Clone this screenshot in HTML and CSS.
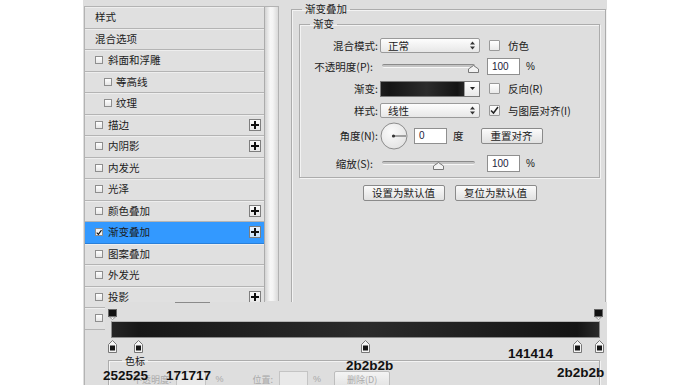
FILE: index.html
```html
<!DOCTYPE html>
<html lang="zh-CN">
<head>
<meta charset="utf-8">
<title>图层样式 - 渐变叠加</title>
<link rel="stylesheet" href="styles.css">
</head>
<body>
<div class="window">
  <div class="main">
    <div class="listwrap">
      <div class="list">
        <div class="row"><span class="lbl">样式</span></div>
        <div class="row"><span class="lbl">混合选项</span></div>
        <div class="row"><span class="cb"></span><span class="lbl">斜面和浮雕</span></div>
        <div class="row sub"><span class="cb"></span><span class="lbl">等高线</span></div>
        <div class="row sub"><span class="cb"></span><span class="lbl">纹理</span></div>
        <div class="row"><span class="cb"></span><span class="lbl">描边</span><span class="plus"><svg width="8" height="8" viewBox="0 0 8 8"><rect x="3" y="0" width="2" height="8" fill="#111"/><rect x="0" y="3" width="8" height="2" fill="#111"/></svg></span></div>
        <div class="row"><span class="cb"></span><span class="lbl">内阴影</span><span class="plus"><svg width="8" height="8" viewBox="0 0 8 8"><rect x="3" y="0" width="2" height="8" fill="#111"/><rect x="0" y="3" width="8" height="2" fill="#111"/></svg></span></div>
        <div class="row"><span class="cb"></span><span class="lbl">内发光</span></div>
        <div class="row"><span class="cb"></span><span class="lbl">光泽</span></div>
        <div class="row"><span class="cb"></span><span class="lbl">颜色叠加</span><span class="plus"><svg width="8" height="8" viewBox="0 0 8 8"><rect x="3" y="0" width="2" height="8" fill="#111"/><rect x="0" y="3" width="8" height="2" fill="#111"/></svg></span></div>
        <div class="row selected"><span class="cb checked"><svg width="7" height="7" viewBox="0 0 7 7"><path d="M0.8 3.6 L2.8 5.6 L6.4 0.8" fill="none" stroke="#111" stroke-width="1.4"/></svg></span><span class="lbl">渐变叠加</span><span class="plus"><svg width="8" height="8" viewBox="0 0 8 8"><rect x="3" y="0" width="2" height="8" fill="#111"/><rect x="0" y="3" width="8" height="2" fill="#111"/></svg></span></div>
        <div class="row"><span class="cb"></span><span class="lbl">图案叠加</span></div>
        <div class="row"><span class="cb"></span><span class="lbl">外发光</span></div>
        <div class="row"><span class="cb"></span><span class="lbl">投影</span><span class="plus"><svg width="8" height="8" viewBox="0 0 8 8"><rect x="3" y="0" width="2" height="8" fill="#111"/><rect x="0" y="3" width="8" height="2" fill="#111"/></svg></span></div>
        <div class="row"><span class="cb"></span><span class="lbl"></span></div>
      </div>
      <div class="scrollbar"></div>
    </div>

    <fieldset class="group outer">
      <legend>渐变叠加</legend>
      <fieldset class="group inner">
        <legend>渐变</legend>

        <div class="frow r1">
          <span class="flabel">混合模式:</span>
          <div class="select"><span>正常</span><svg width="5" height="9" viewBox="0 0 5 9"><path d="M0 3.5 L2.5 0.5 L5 3.5Z M0 5.5 L2.5 8.5 L5 5.5Z" fill="#333"/></svg></div>
          <span class="opt"><span class="box"></span>仿色</span>
        </div>

        <div class="frow r2">
          <span class="flabel slabel">不透明度(P):</span>
          <div class="slider"><div class="track"></div><svg class="thumb" style="left:88px" width="11" height="8" viewBox="0 0 11 8"><path d="M0.5 7.5 V4 L5.5 0.5 L10.5 4 V7.5 Z" fill="#f2f2f2" stroke="#777"/></svg></div>
          <span class="input">100</span><span class="unit">%</span>
        </div>

        <div class="frow r3">
          <span class="flabel">渐变:</span>
          <div class="swatch"><div class="grad"></div><div class="drop"><svg width="5" height="3" viewBox="0 0 5 3"><path d="M0 0 H5 L2.5 3Z" fill="#222"/></svg></div></div>
          <span class="opt"><span class="box"></span>反向(R)</span>
        </div>

        <div class="frow r4">
          <span class="flabel">样式:</span>
          <div class="select"><span>线性</span><svg width="5" height="9" viewBox="0 0 5 9"><path d="M0 3.5 L2.5 0.5 L5 3.5Z M0 5.5 L2.5 8.5 L5 5.5Z" fill="#333"/></svg></div>
          <span class="opt"><span class="box"><svg width="9" height="9" viewBox="0 0 9 9"><path d="M1 4.5 L3.5 7 L8 1" fill="none" stroke="#222" stroke-width="1.5"/></svg></span>与图层对齐(I)</span>
        </div>

        <div class="frow r5">
          <span class="flabel">角度(N):</span>
          <svg class="dial" width="28" height="28" viewBox="0 0 28 28"><defs><radialGradient id="dg" cx="0.4" cy="0.35" r="0.7"><stop offset="0" stop-color="#fbfbfb"/><stop offset="1" stop-color="#e2e2e2"/></radialGradient></defs><circle cx="14" cy="14" r="13" fill="url(#dg)" stroke="#8c8c8c"/><line x1="14" y1="14" x2="26" y2="14" stroke="#555" stroke-width="1"/><circle cx="13.5" cy="14" r="1.6" fill="#333"/></svg>
          <span class="input angle">0</span><span class="unit deg">度</span>
          <button class="btn reset">重置对齐</button>
        </div>

        <div class="frow r6">
          <span class="flabel slabel">缩放(S):</span>
          <div class="slider"><div class="track"></div><svg class="thumb" style="left:53px" width="11" height="8" viewBox="0 0 11 8"><path d="M0.5 7.5 V4 L5.5 0.5 L10.5 4 V7.5 Z" fill="#f2f2f2" stroke="#777"/></svg></div>
          <span class="input">100</span><span class="unit">%</span>
        </div>
      </fieldset>

      <div class="btnrow">
        <button class="btn wide">设置为默认值</button>
        <button class="btn wide">复位为默认值</button>
      </div>
    </fieldset>
  </div>

  <div class="editor">
    <div class="dash"></div>
    <div class="stoprow top">
      <svg class="stop" style="left:calc(0.4% - 4.5px)" width="9" height="11" viewBox="0 0 9 11"><rect x="0.5" y="0.5" width="8" height="7" fill="#111" stroke="#666"/><path d="M1.5 8 L4.5 10.5 L7.5 8Z" fill="#fff" stroke="#888" stroke-width="0.8"/></svg>
      <svg class="stop" style="left:calc(99.6% - 4.5px)" width="9" height="11" viewBox="0 0 9 11"><rect x="0.5" y="0.5" width="8" height="7" fill="#111" stroke="#666"/><path d="M1.5 8 L4.5 10.5 L7.5 8Z" fill="#fff" stroke="#888" stroke-width="0.8"/></svg>
    </div>
    <div class="bar"></div>
    <div class="stoprow bottom">
      <svg class="stop" style="left:calc(0.4% - 4.5px)" width="9" height="13" viewBox="0 0 9 13"><path d="M0.5 4.5 L4.5 0.5 L8.5 4.5 V12.5 H0.5Z" fill="#f4f4f4" stroke="#777"/><rect x="2" y="5.5" width="5" height="5" fill="#151515"/></svg>
      <svg class="stop" style="left:calc(5.7% - 4.5px)" width="9" height="13" viewBox="0 0 9 13"><path d="M0.5 4.5 L4.5 0.5 L8.5 4.5 V12.5 H0.5Z" fill="#f4f4f4" stroke="#777"/><rect x="2" y="5.5" width="5" height="5" fill="#151515"/></svg>
      <svg class="stop" style="left:calc(52.1% - 4.5px)" width="9" height="13" viewBox="0 0 9 13"><path d="M0.5 4.5 L4.5 0.5 L8.5 4.5 V12.5 H0.5Z" fill="#f4f4f4" stroke="#777"/><rect x="2" y="5.5" width="5" height="5" fill="#151515"/></svg>
      <svg class="stop" style="left:calc(95.3% - 4.5px)" width="9" height="13" viewBox="0 0 9 13"><path d="M0.5 4.5 L4.5 0.5 L8.5 4.5 V12.5 H0.5Z" fill="#f4f4f4" stroke="#777"/><rect x="2" y="5.5" width="5" height="5" fill="#151515"/></svg>
      <svg class="stop" style="left:calc(99.8% - 4.5px)" width="9" height="13" viewBox="0 0 9 13"><path d="M0.5 4.5 L4.5 0.5 L8.5 4.5 V12.5 H0.5Z" fill="#f4f4f4" stroke="#777"/><rect x="2" y="5.5" width="5" height="5" fill="#151515"/></svg>
    </div>
    <fieldset class="group stops">
      <legend>色标</legend>
      <div class="faded">
        <span>不透明度:</span><span class="finput"></span><span class="fu">%</span>
        <span class="fpos">位置:</span><span class="finput pos"></span><span class="fu2">%</span>
        <span class="fbtn">删除(D)</span>
      </div>
    </fieldset>

    <span class="note n1">252525</span>
    <span class="note n2">171717</span>
    <span class="note n3">2b2b2b</span>
    <span class="note n4">141414</span>
    <span class="note n5">2b2b2b</span>
  </div>
</div>
</body>
</html>
```

FILE: styles.css
```css
* { box-sizing: border-box; }
html, body { margin: 0; padding: 0; background: #ffffff; }
body {
  width: 690px;
  height: 390px;
  overflow: hidden;
  font-family: "Noto Sans CJK SC", "Liberation Sans", sans-serif;
  font-size: 10.5px;
  color: #1b1b1b;
}

.window {
  margin-left: 83px;
  width: 524px;
  height: 385px;
  background: #dedede;
  position: relative;
  overflow: hidden;
}
.main { display: flex; height: 100%; align-items: flex-start; }

/* ---------- left style list ---------- */
.listwrap {
  display: flex;
  margin: 6px 0 0 1px;
  height: 379px;
  border-top: 1px solid #b3b3b3;
  border-left: 1px solid #b3b3b3;
}
.list {
  width: 180px;
  border-right: 1px solid #ababab;
  overflow: hidden;
}
.row {
  height: 21.5px;
  display: flex;
  align-items: center;
  padding-left: 10px;
  background: #e0e0e0;
  border-bottom: 1px solid #b4b4b4;
  box-shadow: inset 0 1px 0 #eeeeee;
  white-space: nowrap;
  line-height: 14px;
}
.row.sub { padding-left: 19px; }
.row.selected { background: #3399ff; box-shadow: none; border-bottom-color: #2a7fd8; }
.row .cb {
  width: 8px;
  height: 8px;
  border: 1px solid #8e8e8e;
  background: linear-gradient(#ffffff, #e6e6e6);
  margin-right: 5px;
  flex: none;
  display: flex;
  align-items: center;
  justify-content: center;
}
.row .cb.checked { background: #f4f4f4; }
.row.sub .cb { margin-right: 4px; }
.plus {
  margin-left: auto;
  margin-right: 3px;
  width: 12px;
  height: 12px;
  border: 1px solid #7e7e7e;
  background: linear-gradient(#fbfbfb, #e8e8e8);
  display: flex;
  align-items: center;
  justify-content: center;
  flex: none;
}
.selected .plus { background: linear-gradient(#eaf4ff, #c9e2fb); }

.scrollbar {
  width: 14px;
  height: 294px;
  border-right: 1px solid #b2b2b2;
  background: linear-gradient(to right, #d3d3d3, #f7f7f7 40%, #f4f4f4 60%, #d9d9d9);
}

/* ---------- group boxes ---------- */
.group {
  margin: 0;
  min-width: 0;
  border: 1px solid #acacac;
  box-shadow: inset 1px 1px 0 #f3f3f3, 1px 1px 0 #f3f3f3;
}
.group legend {
  padding: 0 3px;
  line-height: 14px;
  font-size: 10.5px;
}
.outer {
  margin: 2px 0 0 12px;
  width: 315px;
  height: 360px;
  padding: 0 5px 0 7px;
}
.outer > legend { margin-left: 3px; }
.inner {
  margin-top: 1px;
  padding: 6px 0 5px 0;
}
.inner > legend { margin-left: 10px; }

.frow { display: flex; align-items: center; height: 17px; white-space: nowrap; }
.r2 { margin-top: 4px; }
.r3 { margin-top: 5px; }
.r4 { margin-top: 5px; }
.r5 { margin-top: 2px; height: 29px; }
.r6 { margin-top: 5px; }

.flabel { width: 78px; text-align: right; margin-right: 2px; flex: none; }
.flabel.slabel { padding-right: 5px; }

.select {
  width: 100px;
  height: 15px;
  border: 1px solid #9a9a9a;
  border-radius: 2px;
  background: linear-gradient(#fdfdfd, #e7e7e7);
  display: flex;
  align-items: center;
  justify-content: space-between;
  padding: 0 4px 0 7px;
  flex: none;
}
.opt { display: flex; align-items: center; margin-left: 9px; }
.opt .box {
  width: 11px;
  height: 11px;
  border: 1px solid #999;
  border-radius: 1px;
  background: linear-gradient(#ffffff, #e9e9e9);
  margin-right: 8px;
  display: flex;
  align-items: center;
  justify-content: center;
}

.slider { position: relative; width: 100px; height: 17px; flex: none; }
.track {
  margin: 6px 5px 0 2px;
  height: 4px;
  border-radius: 2px;
  background: #c4c4c4;
  border-top: 1px solid #8a8a8a;
  border-bottom: 1px solid #f6f6f6;
}
.thumb { position: absolute; top: 7px; }

.input {
  width: 33px;
  height: 17px;
  margin-left: 7px;
  border: 1px solid #8f8f8f;
  background: #ffffff;
  padding-left: 4px;
  display: flex;
  align-items: center;
  color: #1c1c3a;
  font-family: "Liberation Sans", sans-serif;
  font-size: 10px;
}
.unit { margin-left: 6px; font-family: "Liberation Sans", sans-serif; font-size: 10px; }
.input.angle { margin-left: 6px; height: 16px; }
.unit.deg { margin-left: 6px; font-family: "Noto Sans CJK SC", sans-serif; font-size: 10.5px; }

.swatch {
  width: 100px;
  height: 16px;
  border: 1px solid #7a7a7a;
  display: flex;
  flex: none;
}
.grad { flex: 1; background: linear-gradient(to right, #1d1d1d, #151515 10%, #2c2c2c 55%, #141414 92%, #272727); }
.drop {
  width: 15px;
  border-left: 1px solid #9c9c9c;
  background: linear-gradient(#ffffff, #e8e8e8);
  display: flex;
  align-items: center;
  justify-content: center;
}

.dial { flex: none; }

.btn {
  height: 16px;
  padding: 0;
  border: 1px solid #8a8a8a;
  border-radius: 2px;
  background: linear-gradient(#fbfbfb, #e1e1e1);
  font-family: "Noto Sans CJK SC", sans-serif;
  font-size: 10.5px;
  line-height: 14px;
  color: #1b1b1b;
}
.btn.reset { width: 62px; margin-left: 17px; }
.btn.wide { width: 82px; }
.btnrow { display: flex; justify-content: center; gap: 10px; margin-top: 7px; }

/* ---------- gradient editor overlay ---------- */
.editor {
  position: absolute;
  left: 22px;
  top: 302px;
  right: 0;
  bottom: 0;
  background: #dedede;
}
.dash { margin-left: 70px; width: 35px; height: 1px; background: #8a8a8a; }
.stoprow { position: relative; margin: 0 7px 0 6px; }
.stoprow.top { height: 18px; }
.stoprow.top .stop { position: absolute; top: 6px; }
.bar {
  margin: 0 7px 0 6px;
  height: 17px;
  border: 1px solid #8c8c8c;
  border-top-color: #b5b5b5;
  background: linear-gradient(to right, #252525 0%, #171717 5.5%, #2b2b2b 52%, #141414 95.5%, #2b2b2b 100%);
}
.stoprow.bottom { height: 14px; }
.stoprow.bottom .stop { position: absolute; top: 2px; }

.stops {
  margin: 2px 7px 0 3px;
  padding: 4px 0 0 0;
  height: 60px;
}
.stops > legend { margin-left: 13px; font-size: 10px; line-height: 13px; }
.faded {
  display: flex;
  align-items: center;
  margin-left: 24px;
  color: #a9a9a9;
  font-size: 9px;
  white-space: nowrap;
}
.finput {
  width: 30px;
  height: 16px;
  margin-left: 4px;
  border: 1px solid #c4c4c4;
  background: #e9e9e9;
}
.fu { margin-left: 10px; font-family: "Liberation Sans", sans-serif; }
.fpos { margin-left: 29px; }
.finput.pos { margin-left: 6px; width: 29px; }
.fu2 { margin-left: 5px; font-family: "Liberation Sans", sans-serif; }
.fbtn {
  margin-left: 13px;
  width: 56px;
  height: 16px;
  border: 1px solid #bdbdbd;
  border-radius: 2px;
  background: linear-gradient(#f4f4f4, #e4e4e4);
  display: flex;
  align-items: center;
  justify-content: center;
}

.note {
  position: absolute;
  font-family: "Liberation Sans", Arial, sans-serif;
  font-weight: bold;
  font-size: 13.5px;
  line-height: 13px;
  color: #111111;
}
.n1 { left: -2px; top: 67px; }
.n2 { left: 61px; top: 67px; }
.n3 { left: 241px; top: 57px; }
.n4 { left: 403px; top: 45px; }
.n5 { left: 452px; top: 64px; }
```
